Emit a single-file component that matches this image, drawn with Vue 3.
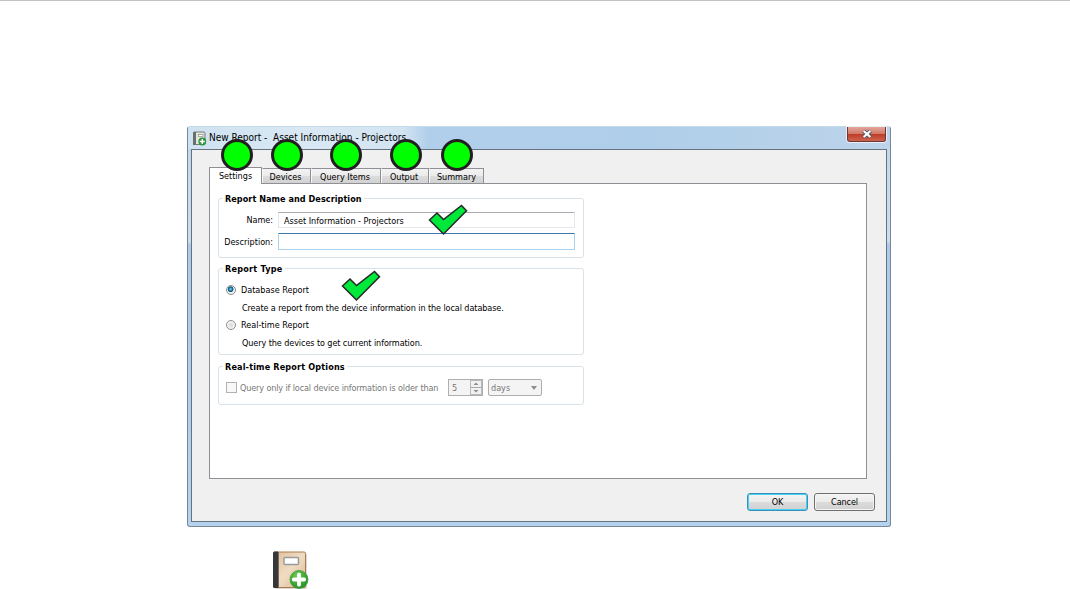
<template>
  <div class="page">
    <div class="window">
      <header class="titlebar">
        <svg class="titlebar-icon" viewBox="0 0 14 15">
          <rect x="0.5" y="1" width="11.5" height="12.5" rx="1" fill="#e6e5dc" stroke="#777b78" />
          <rect x="0" y="1" width="3" height="13" fill="#68706d" />
          <rect x="5.5" y="3.5" width="4.5" height="2" fill="#fff" stroke="#8c8e8a" stroke-width=".7" />
          <circle cx="9.3" cy="10.5" r="3.9" fill="#2f9440" />
          <path d="M9.3 8v5M6.8 10.5h5" stroke="#fff" stroke-width="1.5" />
        </svg>
        <span class="titlebar-text">New Report -&nbsp; Asset Information - Projectors</span>
        <button class="close">
          <svg viewBox="0 0 12 10" width="12" height="10">
            <path d="M2.5 2l7 6M9.5 2l-7 6" stroke="#555b68" stroke-width="4" />
            <path d="M2.7 2l6.6 6M9.3 2L2.7 8" stroke="#fff" stroke-width="2.1" />
          </svg>
        </button>
      </header>

      <div class="client">
        <nav class="tabs">
          <div
            v-for="tab in tabs"
            :key="tab.id"
            class="tab"
            :class="['tab--' + tab.id, { 'tab--active': tab.id === activeTab }]"
            @click="activeTab = tab.id"
          >
            <span class="label">{{ tab.label }}</span>
            <i class="badge"></i>
          </div>
        </nav>

        <main class="panel">
          <section class="group group--name">
            <h2 class="legend legend--name">Report Name and Description</h2>
            <div class="field">
              <label class="field-label">Name:</label>
              <div class="input"><span>{{ name }}</span></div>
            </div>
            <div class="field field--desc">
              <label class="field-label">Description:</label>
              <div class="input input--focus"></div>
            </div>
            <svg class="check check--name" viewBox="0 0 40 32">
              <path :d="checkPath" />
            </svg>
          </section>

          <section class="group group--type">
            <h2 class="legend legend--type">Report Type</h2>
            <div v-for="t in types" :key="t.id" class="option" @click="reportType = t.id">
              <div class="option-head">
                <i class="radio" :class="{ 'radio--on': reportType === t.id }"></i>
                <span class="option-title">{{ t.title }}</span>
              </div>
              <p class="option-hint">{{ t.hint }}</p>
            </div>
            <svg class="check check--type" viewBox="0 0 40 32">
              <path :d="checkPath" />
            </svg>
          </section>

          <section class="group group--options">
            <h2 class="legend legend--options">Real-time Report Options</h2>
            <div class="age">
              <i class="checkbox"></i>
              <span class="age-text">Query only if local device information is older than</span>
              <div class="spin">
                <span>5</span>
                <svg class="spin-buttons" viewBox="0 0 12 15">
                  <rect x=".5" y=".5" width="11" height="14" fill="#f1f1f1" stroke="#bababa" />
                  <path d="M0 7.5h12" stroke="#aaa" />
                  <path d="M3.5 5h5L6 2.5zM3.5 10h5L6 12.5z" fill="#8d8d8d" />
                </svg>
              </div>
              <div class="select">
                <span class="select-text">days</span>
                <i class="arrow"></i>
              </div>
            </div>
          </section>
        </main>

        <footer class="buttons">
          <button class="btn btn--default">OK</button>
          <button class="btn">Cancel</button>
        </footer>
      </div>
    </div>

    <svg class="report-icon" viewBox="0 0 38 39">
      <defs>
        <linearGradient id="cover" x1="0" y1="0" x2="1" y2="1">
          <stop offset="0" stop-color="#dfbe9a" />
          <stop offset=".5" stop-color="#f0dcc4" />
          <stop offset="1" stop-color="#d8b58c" />
        </linearGradient>
        <radialGradient id="plus" cx=".4" cy=".3" r=".7">
          <stop offset="0" stop-color="#72cc50" />
          <stop offset="1" stop-color="#249327" />
        </radialGradient>
      </defs>
      <rect x="2" y="2" width="33" height="36" rx="2" fill="#ddd8d3" />
      <rect x="1.5" y="1" width="32" height="35.5" rx="1.5" fill="url(#cover)" stroke="#a97c50" />
      <path d="M1 2q0-1.5 1.5-1.5H6V37H2.5Q1 37 1 35.5z" fill="#35373a" />
      <path d="M6.5 1v36" stroke="#76685b" />
      <rect x="12" y="6.5" width="14.5" height="7" rx="1" fill="#fff" stroke="#9a9a9d" stroke-width="1.5" />
      <circle cx="27" cy="28.5" r="9" fill="url(#plus)" stroke="#3c9a38" stroke-width=".8" />
      <path d="M27 23.3v10.4M21.8 28.5h10.4" stroke="#fff" stroke-width="3.8" stroke-linecap="round" />
    </svg>
  </div>
</template>

<script setup>
import { ref } from 'vue';

const tabs = [
  { id: 'settings', label: 'Settings' },
  { id: 'devices', label: 'Devices' },
  { id: 'query', label: 'Query Items' },
  { id: 'output', label: 'Output' },
  { id: 'summary', label: 'Summary' },
];

const types = [
  {
    id: 'database',
    title: 'Database Report',
    hint: 'Create a report from the device information in the local database.',
  },
  {
    id: 'realtime',
    title: 'Real-time Report',
    hint: 'Query the devices to get current information.',
  },
];

const activeTab = ref('settings');
const reportType = ref('database');
const name = ref('Asset Information - Projectors');

const checkPath = 'M1.5 16L9 9L15.5 15.5L33.5 1.5L38.5 6.8L15.5 30z';
</script>

<style>
body {
  background: #fff;
}
</style>

<style scoped>
* {
  box-sizing: border-box;
}

.page {
  display: flex;
  flex-direction: column;
  width: 1070px;
  height: 589px;
  overflow: hidden;
  padding: 125px 0 0 187px;
  border-top: 1px solid #c2c2c2;
  font-family: 'DejaVu Sans Condensed', 'DejaVu Sans', sans-serif;
  font-size: 9px;
  line-height: 12px;
  color: #000;
  white-space: nowrap;
}

.window {
  flex: none;
  display: flex;
  flex-direction: column;
  width: 704px;
  height: 401px;
  padding: 0 3px 4px;
  border: 1px solid #798795;
  border-top-color: #c4dbe9;
  border-radius: 3px;
  background: linear-gradient(to bottom, #c1d7eb 0, #cbdeed 115px, #adcbe9 117px, #b5d3ef 100%);
}

.titlebar {
  flex: none;
  display: flex;
  height: 22px;
  margin: 0 -3px;
  padding-left: 5px;
  background: linear-gradient(to right, #cfe2f1 0, #d9e8f4 120px, #d3e4f2 215px, #b1cfea 240px, #afcee9 460px, #bdd4ea 100%);
}

.titlebar-icon {
  width: 14px;
  height: 15px;
  margin-top: 4px;
}

.titlebar-text {
  margin: 5px 0 0 2px;
  font-size: 10px;
}

.close {
  display: flex;
  justify-content: center;
  align-items: center;
  width: 39px;
  height: 15px;
  margin-left: auto;
  margin-right: 4px;
  padding: 0;
  border: 1px solid #6f3532;
  border-top: 0;
  border-radius: 0 0 3px 3px;
  background: linear-gradient(#e2a79d 0, #d37967 48%, #bd3b26 50%, #cc6552 100%);
  box-shadow: 0 0 0 1px #e8f1f8;
}

.client {
  flex: 1;
  display: flex;
  flex-direction: column;
  padding: 16px 18px 0 17px;
  border: 1px solid #66727e;
  background: #f0f0f0;
}

.tabs {
  position: relative;
  z-index: 1;
  display: flex;
  align-items: flex-end;
  height: 18px;
  margin-bottom: -1px;
}

.tab {
  position: relative;
  display: flex;
  justify-content: center;
  height: 15px;
  margin-bottom: 1px;
  padding-top: 2px;
  border: 1px solid #8e9096;
  border-left-color: #f8f8f8;
  border-bottom: 0;
  background: linear-gradient(#f3f3f3 0, #ebebeb 48%, #dcdcdc 52%, #d2d2d2 100%);
}

.tab--active {
  height: 17px;
  margin-bottom: 0;
  border-left-color: #8e9096;
  background: #fff;
}

.tab--settings {
  width: 53px;
}

.tab--devices {
  width: 49px;
  padding-right: 2px;
}

.tab--query {
  width: 70px;
  padding-right: 2px;
}

.tab--output {
  width: 48px;
  padding-right: 2px;
}

.tab--summary {
  width: 55px;
}

.badge {
  position: absolute;
  left: 50%;
  bottom: 12px;
  width: 32px;
  height: 32px;
  margin-left: -16px;
  border: 3px solid #231f20;
  border-radius: 50%;
  background: #0f0;
}

.tab--settings .badge {
  bottom: 13px;
  margin-left: -14.5px;
}

.tab--output .badge {
  margin-left: -15px;
}

.panel {
  width: 658px;
  height: 296px;
  padding: 14px 8px 0;
  border: 1px solid #8e9096;
  background: #fff;
}

.group {
  position: relative;
  width: 366px;
  border: 1px solid #d7e1e8;
  border-radius: 3px;
}

.group--name {
  height: 60px;
}

.group--type {
  height: 87px;
  margin-top: 10px;
}

.group--options {
  height: 39px;
  margin-top: 11px;
}

.legend {
  width: max-content;
  height: 12px;
  margin: -6px 0 0 4px;
  padding: 0 2px;
  background: #fff;
  font-size: 9px;
  font-weight: bold;
}

.legend--name {
  letter-spacing: 0.06px;
}

.legend--type {
  letter-spacing: 0.25px;
}

.legend--options {
  letter-spacing: 0.16px;
}

.field {
  display: flex;
  margin-top: 7px;
  padding-right: 8px;
}

.field--desc {
  margin-top: 5px;
}

.field-label {
  display: flex;
  justify-content: flex-end;
  width: 54px;
  margin: 2px 5px 0 0;
}

.field--desc .field-label {
  margin-top: 3px;
}

.input {
  flex: 1;
  height: 16px;
  padding: 2px 5px;
  border: 1px solid #e4e7eb;
  border-top-color: #abadb3;
}

.input.input--focus {
  height: 17px;
  border: 1px solid #a8d3f0;
  border-top-color: #3d7bad;
}

.option {
  padding-left: 7px;
}

.group--type .legend {
  margin-bottom: 9px;
}

.option-head {
  display: flex;
  align-items: center;
  height: 12px;
}

.radio {
  width: 10px;
  height: 10px;
  border: 1px solid #8b8f92;
  border-radius: 50%;
  background: radial-gradient(circle, #d6d6d6, #f7f7f7 70%);
}

.radio--on {
  background: radial-gradient(circle at 45% 40%, #7ce2fc 0, #1c7fae 25%, #164d72 38%, #edf2f4 50%);
}

.option-title {
  margin-left: 5px;
}

.option-hint {
  height: 12px;
  margin: 6px 0 5px 16px;
  letter-spacing: -0.085px;
}

.age {
  display: flex;
  align-items: center;
  height: 17px;
  margin-top: 6px;
  padding-left: 7px;
  color: #777;
}

.checkbox {
  width: 11px;
  height: 11px;
  border: 1px solid #b1b1b1;
  background: #f8f8f8;
}

.age-text {
  width: 200px;
  margin-left: 3px;
  letter-spacing: -0.13px;
}

.spin {
  display: flex;
  align-items: center;
  width: 35px;
  height: 17px;
  margin-left: 8px;
  padding-left: 3px;
  border: 1px solid #afafaf;
  background: #f4f4f4;
}

.spin-buttons {
  width: 12px;
  height: 15px;
  margin-left: auto;
}

.select {
  display: flex;
  align-items: center;
  width: 54px;
  height: 17px;
  margin-left: 5px;
  padding: 0 4px 0 2px;
  border: 1px solid #adadad;
  border-radius: 2px;
  background: #f4f4f4;
}

.arrow {
  margin-left: auto;
  border: 3.5px solid transparent;
  border-top: 4px solid #8d8d8d;
  border-bottom: 0;
}

.check {
  position: absolute;
  width: 40px;
  height: 32px;
}

.check path {
  fill: #00e83a;
  stroke: #262626;
  stroke-width: 1.5;
}

.check--name {
  left: 209px;
  top: 5px;
}

.check--type {
  left: 122px;
  top: 1px;
}

.buttons {
  display: flex;
  justify-content: flex-end;
  gap: 6px;
  margin-top: 14px;
  margin-right: -7px;
}

.btn {
  width: 61px;
  height: 18px;
  padding: 0;
  border: 1px solid #707070;
  border-radius: 3px;
  background: linear-gradient(#f4f4f4 0, #ebebeb 48%, #dcdcdc 52%, #d0d0d0 100%);
  box-shadow: inset 0 0 0 1px #f5f5f5;
  font-family: inherit;
  font-size: 9px;
  letter-spacing: -0.1px;
  color: #000;
}

.btn--default {
  border-color: #3c8fb5;
  box-shadow: inset 0 0 0 1px #43d1f5;
}

.report-icon {
  flex: none;
  width: 38px;
  height: 39px;
  margin: 24px 0 0 85px;
}
</style>
